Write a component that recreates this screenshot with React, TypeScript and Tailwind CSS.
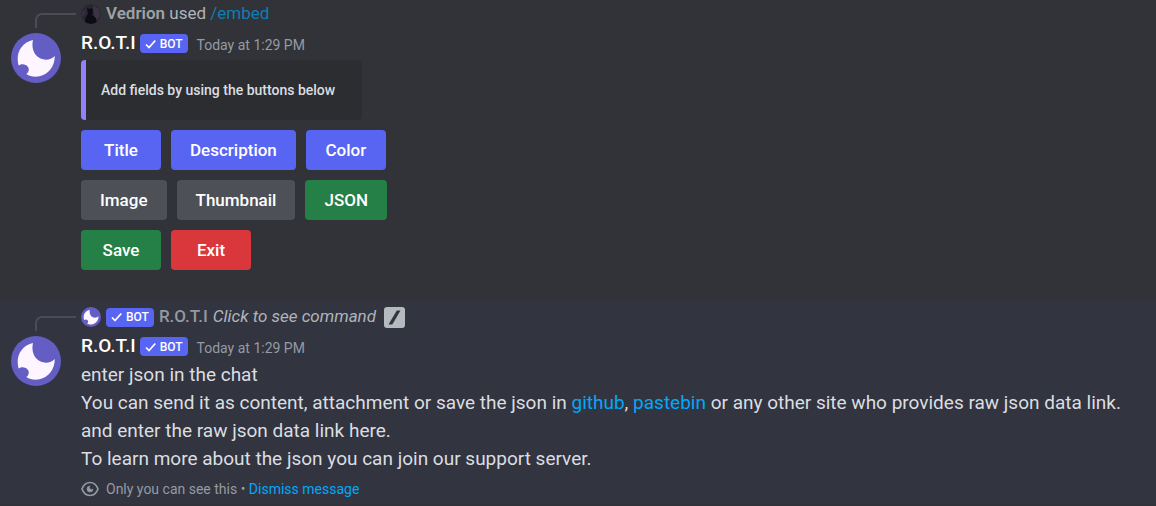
import type { ReactNode } from "react";

function MoonAvatar({ className }: { className: string }) {
  return (
    <svg viewBox="0 0 50 50" className={className} role="img" aria-label="R.O.T.I avatar">
      <circle cx="25" cy="25" r="25" fill="#635dc4" />
      <path
        d="M22 7C12.500 9 6.500 17 6.700 26C6.800 29 7.200 31.200 7.800 32.600C10.500 30.400 15 31 17 34C18.500 36.300 18 39 15.300 41C19 43.500 24 44.200 28.500 43.200C37.500 41.300 43.800 33.500 43.800 23C40.500 26.500 34.500 27.800 29.500 25.500C22.500 22.300 20.300 14.500 22 7Z"
        fill="#fdf5ff"
      />
    </svg>
  );
}

function UserAvatar() {
  return (
    <svg viewBox="0 0 20 20" className="size-5 shrink-0 rounded-full" role="img" aria-label="Vedrion avatar">
      <circle cx="10" cy="10" r="10" fill="#292632" />
      <path d="M12 1l6 4 1 7-4 5-2-7z" fill="#3b3543" />
      <path d="M6 4l2 1 3-1 1 4-1 3 4 3 1 6H3l2-7 2-3z" fill="#0d0c13" />
      <path d="M1 8l4-3-1 5-3 3z" fill="#343044" />
    </svg>
  );
}

function BotTag() {
  return (
    <span className="flex h-[19px] shrink-0 items-center gap-1 rounded-[4px] bg-[#5865f2] px-[5px] text-xs font-medium text-white">
      <svg viewBox="0 0 11 10" className="h-[10px] w-[11px]" fill="none" stroke="currentColor" strokeWidth="1.700" aria-hidden="true">
        <path d="M1 5.500L4 8.500L10.300 1.500" />
      </svg>
      BOT
    </span>
  );
}

function SlashIcon() {
  return (
    <svg viewBox="0 0 21 21" className="ml-[3px] size-[21px] shrink-0" aria-hidden="true">
      <rect width="21" height="21" rx="3" fill="#b5bac1" />
      <path d="M4.500 17.500L12.800 3.500H16.500L8.300 17.500Z" fill="#32343f" />
    </svg>
  );
}

function EyeIcon() {
  return (
    <svg viewBox="0 0 18 16" className="h-4 w-[18px] shrink-0" fill="none" aria-hidden="true">
      <path
        d="M1 8C2.500 4 5.500 1.500 9 1.500S15.500 4 17 8C15.500 12 12.500 14.500 9 14.500S2.500 12 1 8Z"
        stroke="#949ba4"
        strokeWidth="1.700"
      />
      <path d="M9 5A3 3 0 1 0 12 8A1.600 1.600 0 0 1 9 5Z" fill="#949ba4" stroke="#949ba4" strokeWidth="0.600" />
    </svg>
  );
}

function Message({ reply, children, className }: { reply: ReactNode; children: ReactNode; className: string }) {
  return (
    <article className={className}>
      <div className="flex h-[25px] items-start">
        <div className="ml-[35px] mr-[5px] mt-[10px] h-[15px] w-[41px] shrink-0 rounded-tl-[7px] border-l-2 border-t-2 border-[#4b4d55]" />
        <div className="flex h-[22px] items-center gap-[5px] text-[17px] text-[#b0b4bb]">{reply}</div>
      </div>
      <div className="mt-[3px] flex items-start">
        <MoonAvatar className="ml-[11px] mr-5 mt-[2px] size-[50px] shrink-0" />
        <div className="min-w-0 flex-1">
          <header className="flex h-[25px] items-center">
            <span className="mr-1 text-[19px] font-medium text-white">R.O.T.I</span>
            <BotTag />
            <time className="ml-[9px] pt-[3px] text-sm text-[#949ba4]">Today at 1:29 PM</time>
          </header>
          {children}
        </div>
      </div>
    </article>
  );
}

const tones = {
  primary: "bg-[#5865f2]",
  secondary: "bg-[#4e5058]",
  success: "bg-[#248046]",
  danger: "bg-[#da373c]",
};

const rows: { label: string; tone: keyof typeof tones }[][] = [
  [
    { label: "Title", tone: "primary" },
    { label: "Description", tone: "primary" },
    { label: "Color", tone: "primary" },
  ],
  [
    { label: "Image", tone: "secondary" },
    { label: "Thumbnail", tone: "secondary" },
    { label: "JSON", tone: "success" },
  ],
  [
    { label: "Save", tone: "success" },
    { label: "Exit", tone: "danger" },
  ],
];

export default function App() {
  return (
    <main className="min-h-screen bg-[#313338] font-['Roboto',sans-serif]">
      <Message
        className="pb-[31px] pt-[3px]"
        reply={
          <>
            <UserAvatar />
            <p>
              <span className="font-semibold text-[#9fa1a6]">Vedrion</span> used{" "}
              <a href="#embed" className="text-[#0e7db5]">/embed</a>
            </p>
          </>
        }
      >
        <div className="mt-1 flex h-[60px] w-[281px] items-center rounded-[4px] border-l-[5px] border-[#9280ff] bg-[#2b2d31] pl-[15px] text-sm font-medium text-[#dbdee1]">
          Add fields by using the buttons below
        </div>
        <div className="mt-[10px] flex flex-col gap-[10px]">
          {rows.map((row) => (
            <div key={row[0].label} className="flex gap-[10px]">
              {row.map(({ label, tone }) => (
                <button
                  key={label}
                  type="button"
                  className={`h-10 min-w-20 rounded-[4px] px-[19px] pt-px text-[17px] font-medium text-white ${tones[tone]}`}
                >
                  {label}
                </button>
              ))}
            </div>
          ))}
        </div>
      </Message>

      <Message
        className="bg-[#32343f] pb-[5px] pt-[5px]"
        reply={
          <>
            <MoonAvatar className="size-5 shrink-0" />
            <BotTag />
            <span className="font-medium text-[#9698a0]">R.O.T.I</span>
            <a href="#command" className="italic">Click to see command</a>
            <SlashIcon />
          </>
        }
      >
        <div className="mt-[2px] text-[19px] leading-[28px] text-[#dbdee1]">
          <p>enter json in the chat</p>
          <p>
            You can send it as content, attachment or save the json in{" "}
            <a href="#github" className="text-[#00a8fc]">github</a>,{" "}
            <a href="#pastebin" className="text-[#00a8fc]">pastebin</a> or any other site who provides raw json data link.
          </p>
          <p>and enter the raw json data link here.</p>
          <p>To learn more about the json you can join our support server.</p>
        </div>
        <footer className="mt-[6px] flex h-5 items-center gap-[7px] text-sm text-[#949ba4]">
          <EyeIcon />
          <p>
            Only you can see this •{" "}
            <button type="button" className="text-[#00a8fc]">Dismiss message</button>
          </p>
        </footer>
      </Message>
    </main>
  );
}
